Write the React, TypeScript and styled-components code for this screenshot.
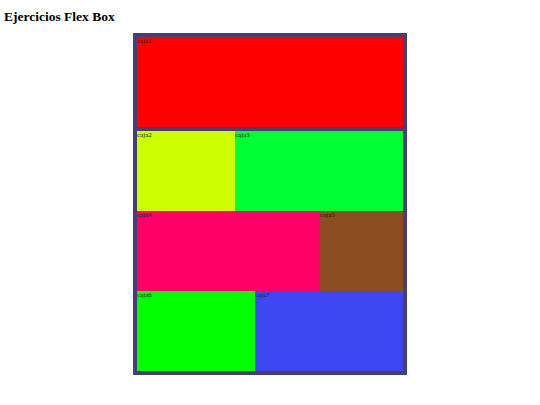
import styled, { createGlobalStyle } from 'styled-components';

const GlobalStyle = createGlobalStyle`
  body {
    margin: 0;
    background: #ffffff;
    font-family: "Liberation Serif", "Times New Roman", serif;
  }
`;

const Page = styled.div`
  padding: 9px 4px 0;
`;

const Title = styled.h1`
  margin: 0 0 9px;
  font-size: 13.5px;
  line-height: 15px;
  font-weight: bold;
  color: #000;
`;

const Container = styled.div`
  width: 266px;
  margin: 0 auto;
  border: 4px solid #473e74;
  background: #473e74;
  display: flex;
  flex-direction: column;
`;

const Row = styled.div<{ $gap?: number }>`
  display: flex;
  height: 80px;
  margin-top: ${(p) => p.$gap ?? 0}px;
`;

const Box = styled.div<{ $bg: string; $w?: number }>`
  background: ${(p) => p.$bg};
  flex: ${(p) => (p.$w ? `0 0 ${p.$w}px` : '1')};
  font-size: 7px;
  line-height: 8px;
  color: #222;
`;

const Header = styled(Box)`
  flex: none;
  height: 90px;
`;

export default function App() {
  return (
    <>
      <GlobalStyle />
      <Page>
        <Title>Ejercicios Flex Box</Title>
        <Container>
          <Header $bg="#ff0000">caja1</Header>
          <Row $gap={4}>
            <Box $bg="#ccff00" $w={98}>caja2</Box>
            <Box $bg="#00ff33">caja3</Box>
          </Row>
          <Row>
            <Box $bg="#ff0066" $w={183}>caja4</Box>
            <Box $bg="#8b4c1f">caja5</Box>
          </Row>
          <Row>
            <Box $bg="#00ff00" $w={118}>caja6</Box>
            <Box $bg="#3e48f2">caja7</Box>
          </Row>
        </Container>
      </Page>
    </>
  );
}
